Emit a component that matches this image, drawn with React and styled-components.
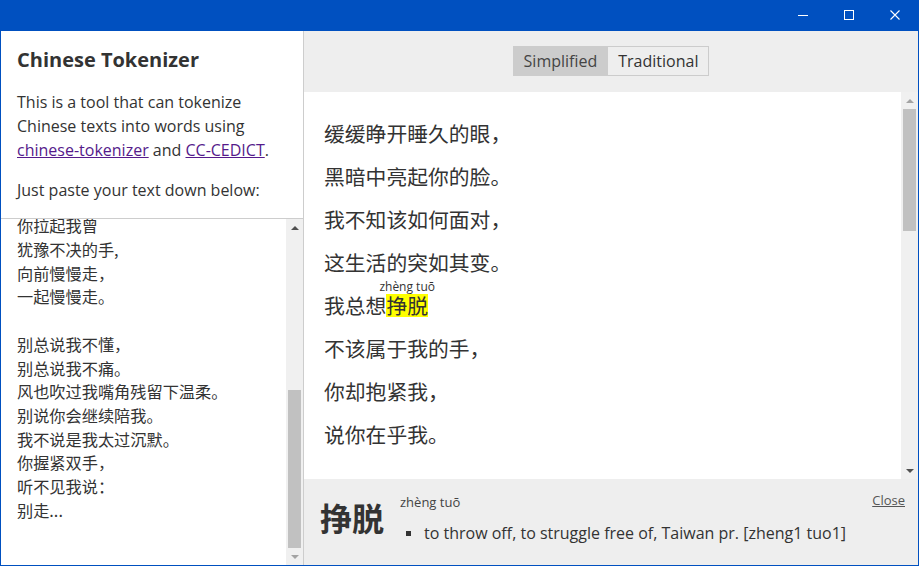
import React, { useEffect, useRef } from "react";
import styled, { createGlobalStyle } from "styled-components";

const GlobalStyle = createGlobalStyle`
  html, body { margin: 0; padding: 0; }
  body {
    width: 919px;
    height: 566px;
    overflow: hidden;
    font-family: "Open Sans", "Noto Sans CJK SC", sans-serif;
    color: #333;
  }
  * { box-sizing: border-box; }
`;

const CJK = `"Noto Sans CJK SC", "Open Sans", sans-serif`;

const Window = styled.div`
  width: 919px;
  height: 566px;
  display: flex;
  flex-direction: column;
  background: #0050c0;
  padding: 0 1px 1px;
`;

const TitleBar = styled.div`
  height: 31px;
  flex: none;
  display: flex;
  justify-content: flex-end;
`;

const WinButton = styled.div`
  width: 46px;
  height: 31px;
  display: flex;
  justify-content: center;
  padding-top: 10px;
  svg { display: block; }
`;

const Body = styled.div`
  flex: 1;
  display: flex;
  min-height: 0;
`;

const Sidebar = styled.aside`
  width: 303px;
  flex: none;
  display: flex;
  flex-direction: column;
  background: #fff;
  border-right: 1px solid #cdcdcd;
`;

const Intro = styled.header`
  padding: 17px 16px 16px;
  border-bottom: 1px solid #cdcdcd;
`;

const Title = styled.h1`
  margin: 0 0 18px;
  font-size: 20px;
  line-height: 24px;
  font-weight: 700;
  color: #333;
`;

const Para = styled.p`
  margin: 0 0 ${(p) => (p.$last ? 0 : 16)}px;
  font-size: 16px;
  line-height: 24px;
  color: #333;
`;

const Link = styled.a`
  color: #551a8b;
  text-decoration: underline;
`;

const Editor = styled.div`
  flex: 1;
  min-height: 0;
  display: flex;
`;

const TextInput = styled.textarea`
  flex: 1;
  min-width: 0;
  border: none;
  outline: none;
  resize: none;
  overflow: hidden;
  margin: 0;
  padding: 0 0 0 16px;
  font-family: ${CJK};
  font-size: 16.2px;
  line-height: 23.7px;
  color: #333;
  background: #fff;
`;

const ScrollTrack = styled.div`
  width: 17px;
  flex: none;
  display: flex;
  flex-direction: column;
  background: #f0f0f0;
`;

const ScrollButton = styled.div`
  height: 17px;
  flex: none;
  display: flex;
  align-items: center;
  justify-content: center;
`;

const Arrow = styled.span`
  width: 0;
  height: 0;
  border-left: 4px solid transparent;
  border-right: 4px solid transparent;
  ${(p) =>
    p.$dir === "up"
      ? `border-bottom: 4px solid ${p.$active ? "#505050" : "#a3a3a3"};`
      : `border-top: 4px solid ${p.$active ? "#505050" : "#a3a3a3"};`}
`;

const Gutter = styled.div`
  flex: 1;
  display: flex;
  flex-direction: column;
`;

const GutterSpace = styled.div`
  flex: ${(p) => p.$grow} 1 0;
`;

const Thumb = styled.div`
  flex: ${(p) => p.$grow} 1 0;
  margin: 0 2px;
  background: #c1c1c1;
`;

const Scrollbar = ({ before, size, upActive, downActive }) => (
  <ScrollTrack>
    <ScrollButton>
      <Arrow $dir="up" $active={upActive} />
    </ScrollButton>
    <Gutter>
      <GutterSpace $grow={before} />
      <Thumb $grow={size} />
      <GutterSpace $grow={Math.max(0, 1 - before - size)} />
    </Gutter>
    <ScrollButton>
      <Arrow $dir="down" $active={downActive} />
    </ScrollButton>
  </ScrollTrack>
);

const Main = styled.main`
  flex: 1;
  min-width: 0;
  display: flex;
  flex-direction: column;
  background: #eee;
`;

const Toolbar = styled.div`
  height: 61px;
  flex: none;
  display: flex;
  align-items: center;
  justify-content: center;
  padding-bottom: 1px;
`;

const ToggleGroup = styled.div`
  display: flex;
`;

const Toggle = styled.button`
  height: 30px;
  margin: 0;
  padding: 0 10px;
  font-family: "Open Sans", sans-serif;
  font-size: 16px;
  color: ${(p) => (p.$active ? "#444" : "#333")};
  background: ${(p) => (p.$active ? "#cccccc" : "#eeeeee")};
  border: 1px solid #cccccc;
  & + & { border-left: none; }
`;

const ReaderRow = styled.div`
  flex: 1;
  min-height: 0;
  display: flex;
  background: #fff;
`;

const Reader = styled.div`
  flex: 1;
  min-width: 0;
  overflow: hidden;
  padding: 20px 20px 0;
`;

const Line = styled.div`
  font-family: ${CJK};
  font-size: 20.8px;
  line-height: 43px;
  color: #333;
  white-space: nowrap;
`;

const Word = styled.span`
  position: relative;
  display: inline-block;
  line-height: 23px;
  background: ${(p) => (p.$selected ? "#ffff00" : "transparent")};
`;

const Reading = styled.span`
  position: absolute;
  left: 50%;
  bottom: calc(100% + 1px);
  transform: translateX(-50%);
  font-family: "Open Sans", sans-serif;
  font-size: 12px;
  line-height: 12px;
  white-space: nowrap;
  color: #333;
`;

const Definition = styled.section`
  height: 86px;
  flex: none;
  display: flex;
  align-items: flex-start;
  padding: 14px 13px 0 16px;
  background: #eee;
`;

const Headword = styled.div`
  font-family: ${CJK};
  font-size: 32px;
  font-weight: 700;
  line-height: 36px;
  margin-top: 6px;
  color: #333;
`;

const Info = styled.div`
  flex: 1;
  margin-left: 16px;
`;

const InfoPinyin = styled.div`
  font-size: 13px;
  line-height: 18px;
  color: #444;
`;

const Meanings = styled.ul`
  margin: 10px 0 0;
  padding: 0;
  list-style: none;
`;

const Meaning = styled.li`
  display: flex;
  align-items: center;
  font-size: 16px;
  line-height: 24px;
  color: #333;
  &::before {
    content: "";
    width: 5px;
    height: 5px;
    margin: 0 13px 0 6px;
    background: #333;
    flex: none;
  }
`;

const CloseLink = styled.a`
  font-size: 13px;
  line-height: 18px;
  margin-top: -2px;
  color: #555;
  text-decoration: underline;
`;

const readerLines = [
  [{ t: "缓缓" }, { t: "睁开" }, { t: "睡" }, { t: "久" }, { t: "的" }, { t: "眼" }, { t: "，" }],
  [{ t: "黑暗" }, { t: "中" }, { t: "亮" }, { t: "起" }, { t: "你" }, { t: "的" }, { t: "脸" }, { t: "。" }],
  [{ t: "我" }, { t: "不知" }, { t: "该" }, { t: "如何" }, { t: "面对" }, { t: "，" }],
  [{ t: "这" }, { t: "生活" }, { t: "的" }, { t: "突如其变" }, { t: "。" }],
  [{ t: "我" }, { t: "总" }, { t: "想" }, { t: "挣脱", py: "zhèng tuō", sel: true }],
  [{ t: "不该" }, { t: "属于" }, { t: "我" }, { t: "的" }, { t: "手" }, { t: "，" }],
  [{ t: "你" }, { t: "却" }, { t: "抱紧" }, { t: "我" }, { t: "，" }],
  [{ t: "说" }, { t: "你" }, { t: "在乎" }, { t: "我" }, { t: "。" }],
];

const before = [
  "缓缓睁开睡久的眼，",
  "黑暗中亮起你的脸。",
  "我不知该如何面对，",
  "这生活的突如其变。",
  "我总想挣脱",
  "不该属于我的手，",
  "你却抱紧我，",
  "说你在乎我。",
  "",
];

const visible = [
  "你拉起我曾",
  "犹豫不决的手,",
  "向前慢慢走，",
  "一起慢慢走。",
  "",
  "别总说我不懂，",
  "别总说我不痛。",
  "风也吹过我嘴角残留下温柔。",
  "别说你会继续陪我。",
  "我不说是我太过沉默。",
  "你握紧双手，",
  "听不见我说：",
  "别走...",
  "",
  "",
];

const sourceText = [...before, ...visible].join("\n");

export default function App() {
  const inputRef = useRef(null);
  useEffect(() => {
    if (inputRef.current) {
      inputRef.current.scrollTop = Math.round(before.length * 23.7 + 5);
    }
  }, []);

  return (
    <>
      <GlobalStyle />
      <Window>
        <TitleBar>
          <WinButton>
            <svg width="10" height="10" viewBox="0 0 10 10">
              <path d="M0 5.5H10" stroke="#fff" strokeWidth="1" />
            </svg>
          </WinButton>
          <WinButton>
            <svg width="10" height="10" viewBox="0 0 10 10">
              <rect x="0.5" y="0.5" width="9" height="9" fill="none" stroke="#fff" strokeWidth="1" />
            </svg>
          </WinButton>
          <WinButton>
            <svg width="10" height="10" viewBox="0 0 10 10">
              <path d="M0.5 0.5L9.5 9.5M9.5 0.5L0.5 9.5" stroke="#fff" strokeWidth="1.1" />
            </svg>
          </WinButton>
        </TitleBar>
        <Body>
          <Sidebar>
            <Intro>
              <Title>Chinese Tokenizer</Title>
              <Para>
                This is a tool that can tokenize Chinese texts into words using{" "}
                <Link href="#">chinese-tokenizer</Link> and <Link href="#">CC-CEDICT</Link>.
              </Para>
              <Para $last>Just paste your text down below:</Para>
            </Intro>
            <Editor>
              <TextInput ref={inputRef} readOnly value={sourceText} spellCheck={false} />
              <Scrollbar before={0.492} size={0.508} upActive downActive={false} />
            </Editor>
          </Sidebar>
          <Main>
            <Toolbar>
              <ToggleGroup>
                <Toggle $active>Simplified</Toggle>
                <Toggle>Traditional</Toggle>
              </ToggleGroup>
            </Toolbar>
            <ReaderRow>
              <Reader>
                {readerLines.map((line, i) => (
                  <Line key={i}>
                    {line.map((w, j) =>
                      w.sel ? (
                        <Word key={j} $selected>
                          <Reading>{w.py}</Reading>
                          {w.t}
                        </Word>
                      ) : (
                        <React.Fragment key={j}>{w.t}</React.Fragment>
                      )
                    )}
                  </Line>
                ))}
              </Reader>
              <Scrollbar before={0} size={0.347} upActive={false} downActive />
            </ReaderRow>
            <Definition>
              <Headword>挣脱</Headword>
              <Info>
                <InfoPinyin>zhèng tuō</InfoPinyin>
                <Meanings>
                  <Meaning>to throw off, to struggle free of, Taiwan pr. [zheng1 tuo1]</Meaning>
                </Meanings>
              </Info>
              <CloseLink href="#">Close</CloseLink>
            </Definition>
          </Main>
        </Body>
      </Window>
    </>
  );
}
